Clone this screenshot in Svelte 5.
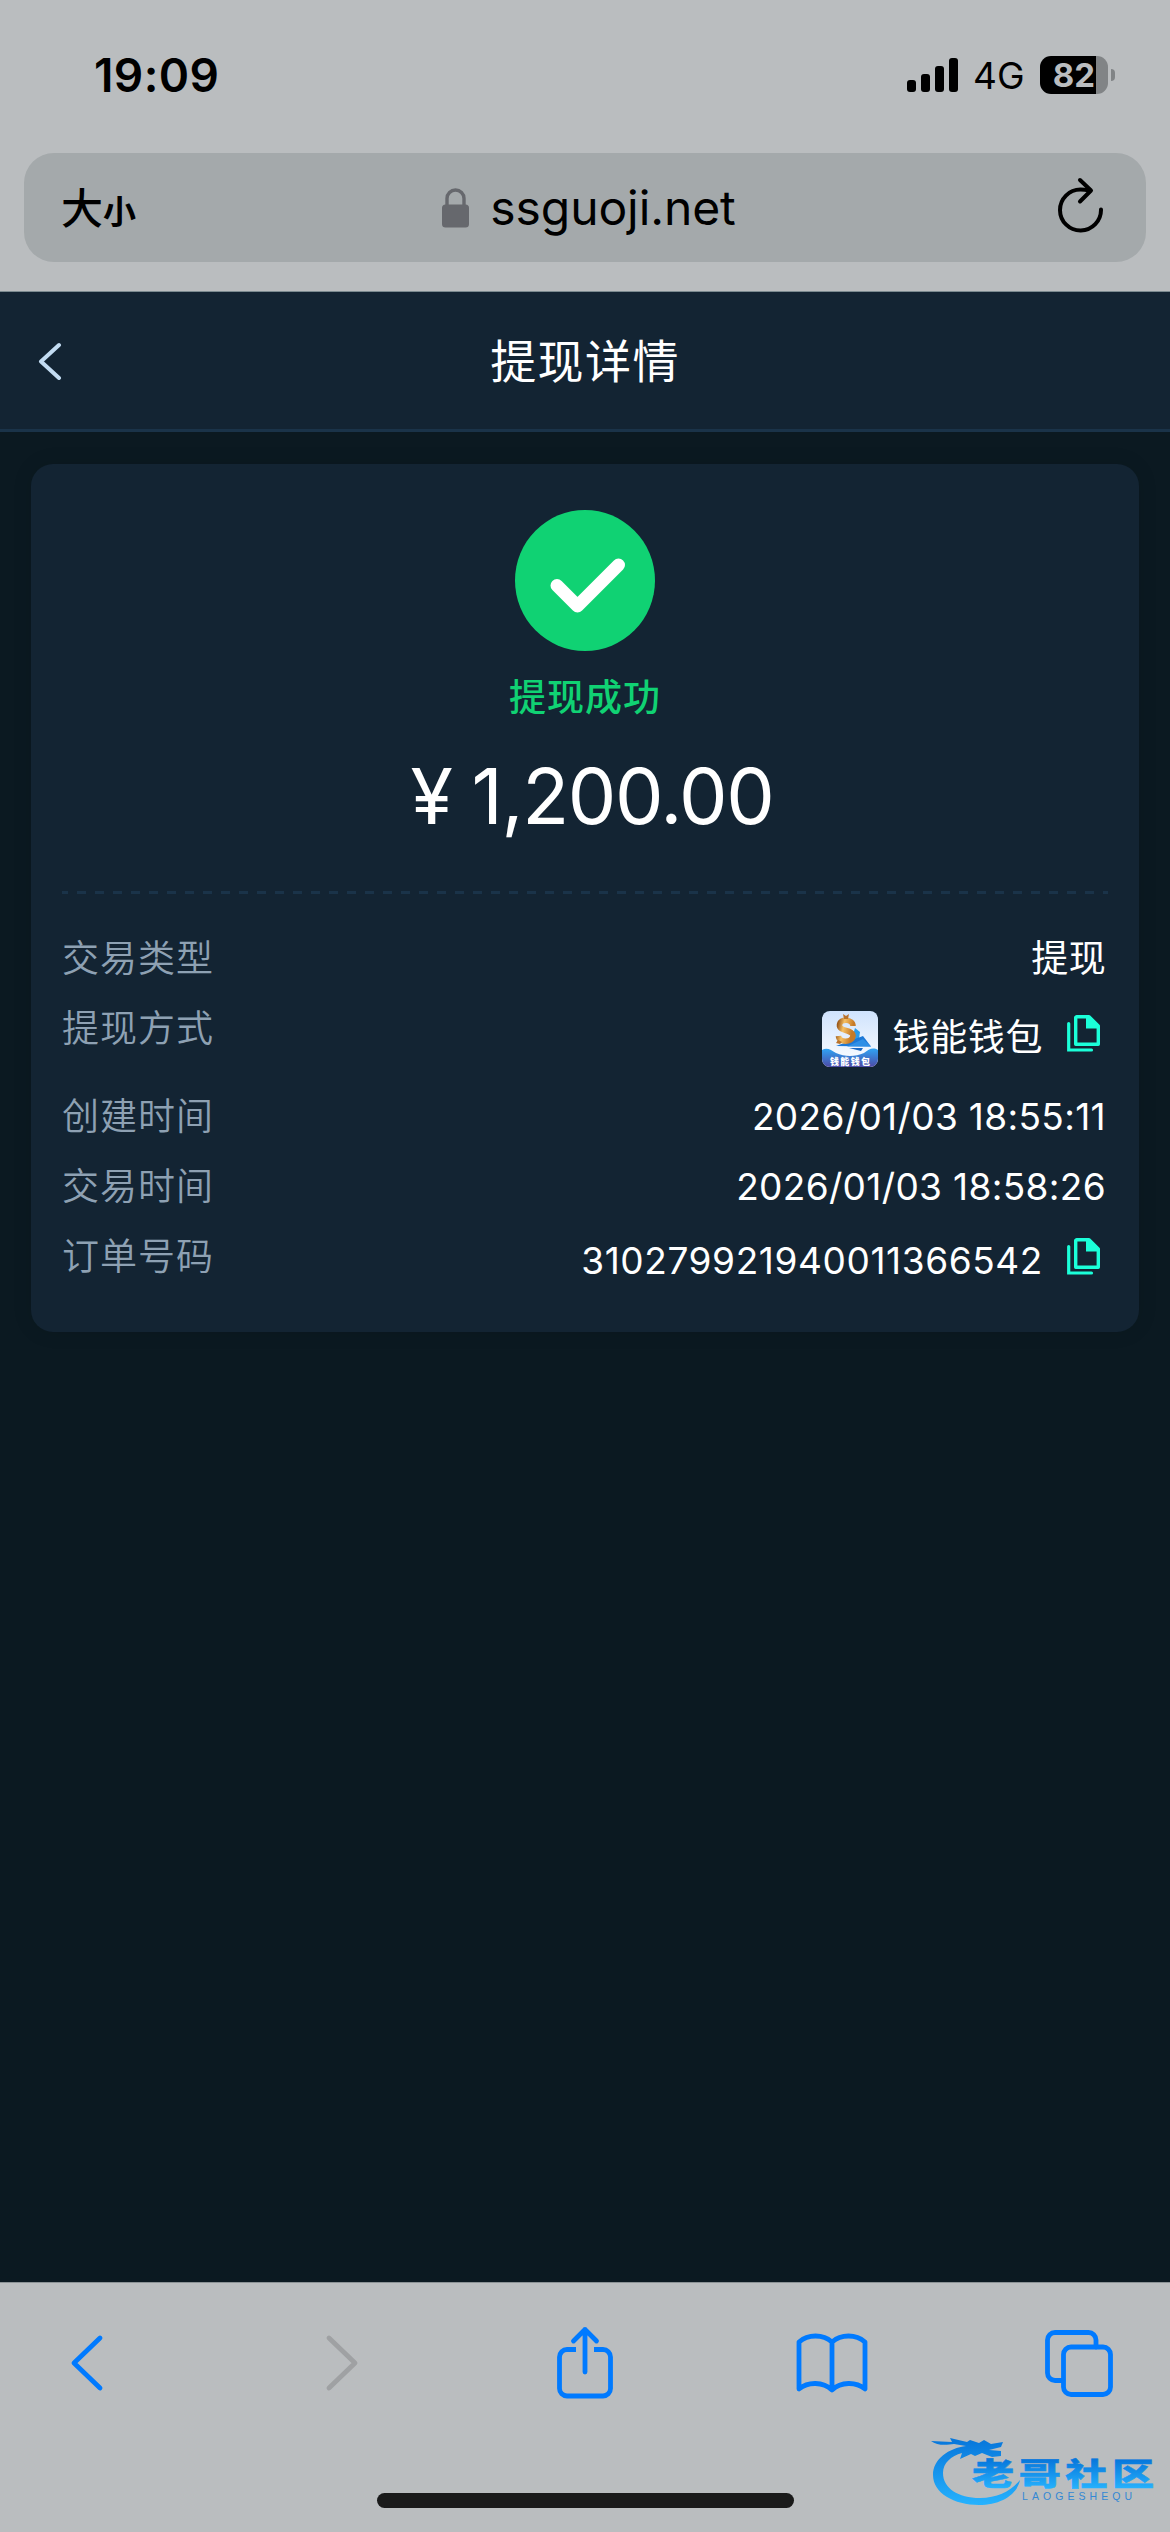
<script lang="ts">
  type Row = {
    label: string;
    value: string;
    wallet?: boolean;
    copyable?: boolean;
  };

  const rows: Row[] = [
    { label: '交易类型', value: '提现' },
    { label: '提现方式', value: '钱能钱包', wallet: true, copyable: true },
    { label: '创建时间', value: '2026/01/03 18:55:11' },
    { label: '交易时间', value: '2026/01/03 18:58:26' },
    { label: '订单号码', value: '310279921940011366542', copyable: true }
  ];

  const signalBars = [12, 18, 26, 34];
  const battery = 82;
</script>

<div class="screen">
  <header class="browser-top">
    <div class="status-bar">
      <span class="time">19:09</span>
      <div class="status-right">
        <div class="signal">
          {#each signalBars as height}
            <i style="height: {height}px"></i>
          {/each}
        </div>
        <span class="network">4G</span>
        <div class="battery">
          <div class="battery-body" style="--level: {battery}%"><span>{battery}</span></div>
          <div class="battery-tip"></div>
        </div>
      </div>
    </div>

    <div class="address-bar">
      <span class="text-size">大<small>小</small></span>
      <div class="host">
        <svg width="27" height="40" viewBox="0 0 27 40">
          <path d="M5 18V10.500a8.500 8.500 0 0 1 17 0V18" fill="none" stroke="#66686d" stroke-width="3.400" />
          <rect y="16.500" width="27" height="23" rx="3.500" fill="#66686d" />
        </svg>
        <span>ssguoji.net</span>
      </div>
      <svg class="reload" width="46" height="56" viewBox="0 0 46 56" fill="none" stroke="#000" stroke-width="4" stroke-linecap="round" stroke-linejoin="round">
        <path d="M43 32.500A20.500 20.500 0 1 1 22.500 12.500C26 12.500 29 13 32 13.500" />
        <path d="M22 3L33 13.500L22 24.500" />
      </svg>
    </div>
  </header>

  <nav class="page-nav">
    <svg class="back" width="24" height="38" viewBox="0 0 24 38" fill="none" stroke="#c3dcf2" stroke-width="4" stroke-linecap="round" stroke-linejoin="round">
      <path d="M21 3L3 19.500L21 36" />
    </svg>
    <h1>提现详情</h1>
  </nav>

  <main>
    <section class="card">
      <div class="summary">
        <svg width="140" height="141" viewBox="0 0 140 141">
          <ellipse cx="70" cy="70.500" rx="70" ry="70.500" fill="#10d273" />
          <path d="M42 75.500L62.500 96L103.500 55" fill="none" stroke="#fff" stroke-width="13" stroke-linecap="round" stroke-linejoin="round" />
        </svg>
        <div class="result">提现成功</div>
        <div class="amount"><span>¥</span><span>1,200.00</span></div>
      </div>

      <div class="divider"></div>

      <dl>
        {#each rows as row}
          <div class="row" class:has-icon={row.wallet} class:has-copy={row.copyable}>
            <dt>{row.label}</dt>
            <dd>
              {#if row.wallet}
                <svg class="wallet" width="56" height="56" viewBox="0 0 56 56">
                  <defs>
                    <linearGradient id="sky" x2="0" y2="1">
                      <stop offset="0" stop-color="#cfe3fd" />
                      <stop offset="1" stop-color="#fff" />
                    </linearGradient>
                    <linearGradient id="sea" x2="0" y2="1">
                      <stop offset="0" stop-color="#2fa4f4" />
                      <stop offset="1" stop-color="#4d4aa6" />
                    </linearGradient>
                    <linearGradient id="gold" x2="1" y2="0.3">
                      <stop offset="0" stop-color="#9c5a1c" />
                      <stop offset="0.4" stop-color="#f6c063" />
                      <stop offset="1" stop-color="#c67a28" />
                    </linearGradient>
                    <clipPath id="tile"><rect width="56" height="56" rx="8" /></clipPath>
                  </defs>
                  <g clip-path="url(#tile)">
                    <rect width="56" height="56" fill="url(#sky)" />
                    <path d="M33 17L38 21L37 28L29 31Z" fill="#2b9bea" />
                    <path d="M14 35L41 25L49 35.500Z" fill="#1d78d6" />
                    <path d="M25 35.500H49L41 28Z" fill="#2e8fe6" />
                    <path d="M27 37H41L39 40Z" fill="#1767c4" />
                    <path d="M31 15C31 8 18 7 17.500 14C17 21 31 18 31 25C30 32 17 32 16.500 25" fill="none" stroke="url(#gold)" stroke-width="5.600" />
                    <path d="M21 3L24 5L27 3L26 8H22ZM16 29L20 31L18 33L14 32Z" fill="#b9722b" />
                    <path d="M0 39C5 36 9 39 14 42C23 46 33 46 42 42C47 38 51 36 56 39V56H0Z" fill="url(#sea)" />
                    <text x="28" y="53.500" text-anchor="middle" textLength="40" font-size="9" font-weight="900" fill="#fff">钱能钱包</text>
                  </g>
                </svg>
              {/if}
              <span class="value">{row.value}</span>
              {#if row.copyable}
                <svg class="copy" width="33" height="37" viewBox="0 0 33 37">
                  <path d="M1.700 8.500V35H24.500" fill="none" stroke="#1bffd9" stroke-width="3.200" stroke-linecap="round" />
                  <path d="M9.500 1.700H22L31.300 11V29.300H8.700V2.500Z" fill="none" stroke="#1bffd9" stroke-width="3.400" stroke-linejoin="round" />
                  <path d="M19 1H22.500L32 10.500V13.500H19Z" fill="#1bffd9" />
                </svg>
              {/if}
            </dd>
          </div>
        {/each}
      </dl>
    </section>
  </main>

  <footer class="toolbar">
    <div class="tools">
      <svg class="previous" width="34" height="58" viewBox="0 0 34 58">
        <path d="M30 4L4 29L30 54" />
      </svg>
      <svg class="next" width="34" height="58" viewBox="0 0 34 58">
        <path d="M4 4L30 29L4 54" />
      </svg>
      <svg width="58" height="74" viewBox="0 0 58 74">
        <path stroke-linecap="butt" d="M20 23.500H11A7.500 7.500 0 0 0 3.500 31V62.500A7.500 7.500 0 0 0 11 70H47A7.500 7.500 0 0 0 54.500 62.500V31A7.500 7.500 0 0 0 47 23.500H38" />
        <path d="M29 46V3.500M17.500 15L29 3.500L40.500 15" />
      </svg>
      <svg width="72" height="60" viewBox="0 0 72 60">
        <path d="M36 9V57M36 9C27 1 12 1 3 9V56C12 48.500 27 48.500 36 57C45 48.500 60 48.500 69 56V9C60 1 45 1 36 9Z" />
      </svg>
      <svg width="68" height="67" viewBox="0 0 68 67">
        <path d="M51 17V10A7.500 7.500 0 0 0 43.500 2.500H10A7.500 7.500 0 0 0 2.500 10V43A7.500 7.500 0 0 0 10 50.500H18" />
        <rect x="18.500" y="17" width="47" height="47.500" rx="7.500" />
      </svg>
    </div>
    <div class="home-indicator"></div>

    <svg class="watermark" width="240" height="90" viewBox="0 0 240 90">
      <defs>
        <linearGradient id="brand" gradientUnits="userSpaceOnUse" x1="0" y1="10" x2="0" y2="76">
          <stop offset="0" stop-color="#0878dc" />
          <stop offset="1" stop-color="#27b4ff" />
        </linearGradient>
        <linearGradient id="brand-text" x2="0" y2="1">
          <stop offset="0.25" stop-color="#0878dc" />
          <stop offset="0.9" stop-color="#27b4ff" />
        </linearGradient>
      </defs>
      <path fill="url(#brand)" d="M37 15C20 17 4 28 4 44C4 62 25 74 50 74C71 74 88 64 91 49C82 60 69 67 51 67C29 67 14 57 14 42C14 32 22 25 33 22L31 28L42 23L46 25L53 22L63 26L72 25V20L60 19L72 16L74 11L62 13L55 9L50 12L41 9L38 11L21 7L23 11L2 10C8 15 18 14 25 13Z" />
      <text transform="translate(43 54) scale(1.360 1)" textLength="134" font-size="31" font-weight="900" fill="url(#brand-text)" stroke="url(#brand-text)" stroke-width="0.500">老哥社区</text>
      <text class="latin" x="93" y="69" textLength="110" font-size="10.500" fill="#3388d4">LAOGESHEQU</text>
    </svg>
  </footer>
</div>

<style>
  :global(body) {
    background: #0b1921;
  }

  .screen {
    display: flex;
    flex-direction: column;
    width: 1170px;
    height: 2532px;
    overflow: hidden;
    background: #0b1921;
    color: #fff;
    font-family: Inter, 'Noto Sans CJK SC', sans-serif;
  }

  .browser-top {
    box-sizing: border-box;
    height: 292px;
    border-bottom: 1px solid #7b8a90;
    background: #babdbf;
    color: #000;
  }

  .status-bar {
    display: flex;
    align-items: center;
    justify-content: space-between;
    height: 149px;
    padding: 0 55px 4px 94px;
  }

  .time {
    font-size: 46px;
    font-weight: 600;
    letter-spacing: 0.4px;
  }

  .status-right {
    display: flex;
    align-items: center;
  }

  .signal {
    display: flex;
    align-items: flex-end;
    gap: 5px;
    height: 34px;
  }

  .signal i {
    width: 9px;
    border-radius: 3px;
    background: #000;
  }

  .network {
    width: 51px;
    margin: 3px 0 0 15px;
    font-size: 37px;
    line-height: 40px;
  }

  .battery {
    display: flex;
    align-items: center;
    gap: 3px;
    margin-left: 16px;
  }

  .battery-body {
    width: 68px;
    height: 38px;
    border-radius: 11px;
    background: linear-gradient(90deg, #000 var(--level), #818486 var(--level));
    color: #babdbf;
    font-size: 33px;
    font-weight: 700;
    line-height: 38px;
    text-align: center;
  }

  .battery-tip {
    width: 4px;
    height: 12px;
    border-radius: 0 5px 5px 0;
    background: #818486;
  }

  .address-bar {
    display: grid;
    grid-template-columns: 200px 1fr 200px;
    align-items: center;
    box-sizing: border-box;
    height: 109px;
    margin: 0 24px;
    padding: 0 42px 0 37px;
    border-radius: 30px;
    background: #a4a9ab;
  }

  .text-size {
    padding-top: 6px;
    font-size: 42px;
    font-weight: 500;
    line-height: 60px;
  }

  .text-size small {
    font-size: 33px;
    font-weight: 700;
  }

  .host {
    display: flex;
    align-items: center;
    justify-content: center;
    gap: 21px;
    margin-left: 13px;
    font-size: 48px;
    letter-spacing: -0.1px;
  }

  .reload {
    justify-self: end;
    margin-bottom: 6px;
  }

  .page-nav {
    display: grid;
    grid-template-columns: 100px 1fr 100px;
    align-items: center;
    box-sizing: border-box;
    height: 140px;
    border-bottom: 3px solid #1a3349;
    background: #132433;
  }

  .back {
    margin-left: 38px;
  }

  h1 {
    margin: 0;
    font-size: 46px;
    font-weight: 400;
    letter-spacing: 1.4px;
    line-height: 60px;
    text-align: center;
  }

  main {
    flex: 1;
    padding: 32px 31px;
  }

  .card {
    padding: 46px 31px 40px;
    border-radius: 22px;
    background: #132433;
    box-shadow: 0 0 20px rgba(0, 0, 0, 0.1);
  }

  .summary {
    display: flex;
    flex-direction: column;
    align-items: center;
  }

  .result {
    margin-top: 17px;
    color: #10d273;
    font-size: 37px;
    font-weight: 500;
    letter-spacing: 1px;
    line-height: 60px;
  }

  .amount {
    display: flex;
    gap: 20px;
    margin: 19px 0 46px 14px;
    font-size: 77px;
    letter-spacing: -1.4px;
    line-height: 98px;
  }

  .divider {
    height: 3px;
    background: repeating-linear-gradient(90deg, #1a3349 0 9px, transparent 9px 18px) -3px 0 / 1080px 3px;
  }

  dl {
    display: flex;
    flex-direction: column;
    gap: 15px;
    margin: 37px 0 0;
  }

  .row {
    display: flex;
    justify-content: space-between;
    min-height: 55px;
    font-size: 37px;
    line-height: 55px;
  }

  .row.has-copy {
    min-height: 63px;
  }

  .row.has-icon {
    min-height: 73px;
  }

  dt {
    color: #8ea1b3;
    font-weight: 350;
    letter-spacing: 1px;
  }

  dd {
    display: flex;
    align-items: center;
    margin: 0 2px 0 0;
    letter-spacing: 0.35px;
  }

  .has-copy dd {
    letter-spacing: 0.6px;
  }

  .wallet {
    margin: 3px 15px 0 0;
    font-family: 'Noto Sans CJK SC', sans-serif;
    letter-spacing: 0;
  }

  .copy {
    margin: 0 6px 9px 24px;
  }

  .toolbar {
    position: relative;
    display: flex;
    flex-direction: column;
    align-items: center;
    justify-content: space-between;
    box-sizing: border-box;
    height: 250px;
    padding: 43px 0 24px;
    border-top: 1px solid #8b9295;
    background: #babdbf;
  }

  .tools {
    display: grid;
    grid-template-columns: repeat(5, 247px);
    align-items: center;
    justify-content: center;
    justify-items: center;
    width: 100%;
    fill: none;
    stroke: #007aff;
    stroke-width: 4.8px;
    stroke-linecap: round;
    stroke-linejoin: round;
  }

  .previous {
    margin-right: 9px;
  }

  .next {
    margin-left: 7px;
    stroke: #9fa1a3;
  }

  .home-indicator {
    width: 417px;
    height: 15px;
    border-radius: 8px;
    background: #1a1a1a;
  }

  .watermark {
    position: absolute;
    right: 1px;
    bottom: 11px;
    font-family: 'Noto Sans CJK SC', sans-serif;
  }

  .latin {
    font-family: 'Liberation Sans', sans-serif;
  }
</style>
